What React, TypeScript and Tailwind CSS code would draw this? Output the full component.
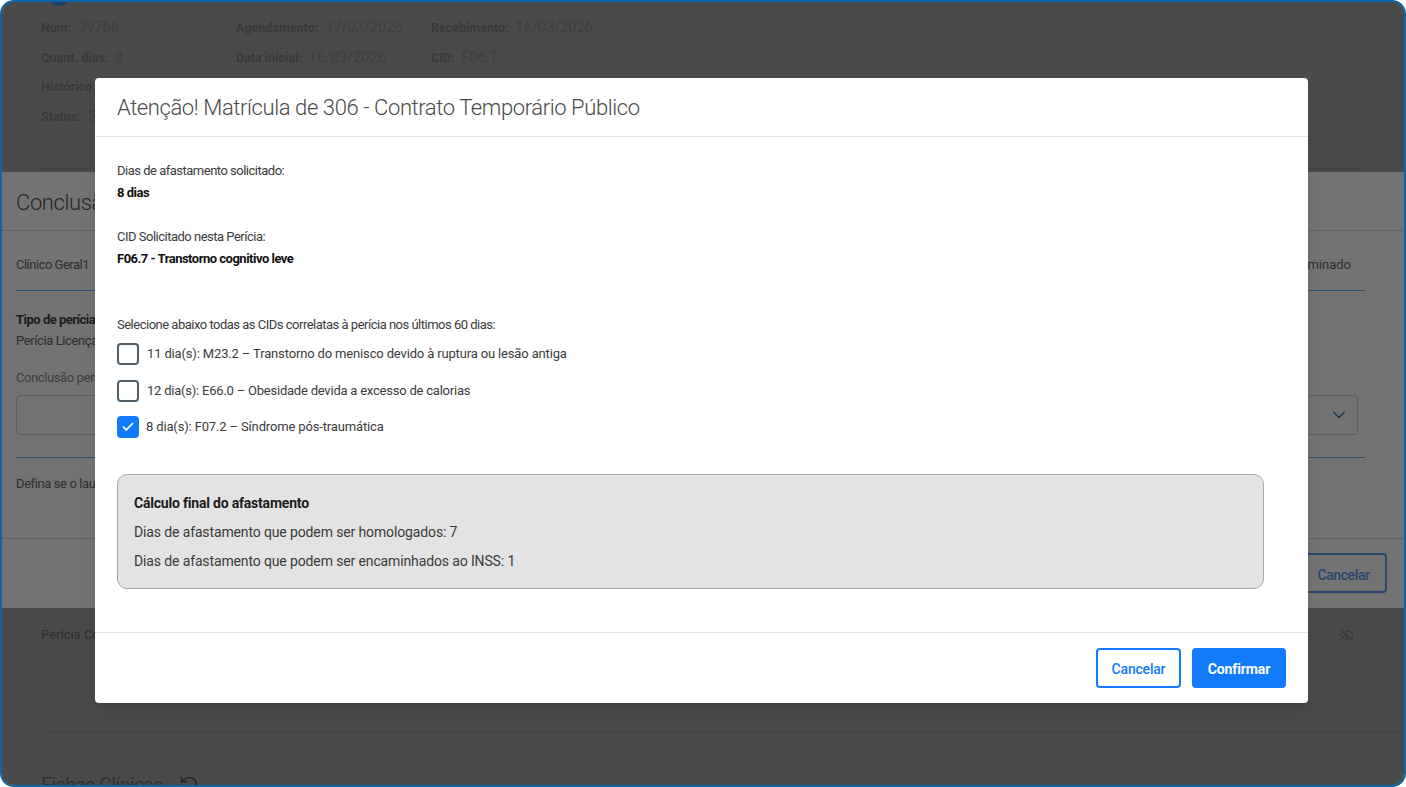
import { Check, ChevronDown, EyeOff, RefreshCcw } from 'lucide-react';

function InfoItem({ label, value, width }: { label: string; value?: string; width: string }) {
  return (
    <div className={`flex items-baseline gap-[7px] ${width}`}>
      <span className="text-[12.5px] font-bold leading-[18px] text-[#7e7e7e]">{label}</span>
      {value && <span className="text-[14.5px] leading-[18px] text-[#8c8c8c]">{value}</span>}
    </div>
  );
}

function CidOption({ text, checked, tight }: { text: string; checked?: boolean; tight?: boolean }) {
  return (
    <label className={checked ? '-mt-px flex h-[22px] items-center gap-[7px]' : 'flex h-[22px] items-center gap-2'}>
      {checked ? (
        <span className="flex h-[22px] w-[22px] items-center justify-center rounded-[4px] bg-[#127bfb] text-white">
          <Check size={14} strokeWidth={3} />
        </span>
      ) : (
        <span className="h-[22px] w-[22px] rounded-[4px] border-2 border-[#4d5f68] bg-white" />
      )}
      <span className={tight ? 'text-[13px] tracking-[-0.22px] text-[#3b3b3b]' : 'text-[13px] tracking-[-0.15px] text-[#3b3b3b]'}>
        {text}
      </span>
    </label>
  );
}

export default function App() {
  return (
    <div className="h-[787px] w-[1406px] overflow-hidden bg-white font-['Roboto',sans-serif]">
      <div className="relative h-full overflow-hidden rounded-[14px] border-2 border-[#0b67a8] bg-[#a5a5a5]">
        {/* Page behind the dialog */}
        <div className="flex h-[170px] flex-col">
          <div className="-mt-[20px] mb-[13px] ml-[46px] h-[24px] w-[22px] shrink-0 rounded-full bg-[#3f8fe8]" />
          <div className="flex flex-col gap-[11.6px] pl-[39px]">
            <div className="flex h-[18px]">
              <InfoItem label="Num:" value="39766" width="w-[195px]" />
              <InfoItem label="Agendamento:" value="17/03/2026" width="w-[195px]" />
              <InfoItem label="Recebimento:" value="16/03/2026" width="w-[195px]" />
            </div>
            <div className="flex h-[18px]">
              <InfoItem label="Quant. dias:" value="8" width="w-[195px]" />
              <InfoItem label="Data inicial:" value="16/03/2026" width="w-[195px]" />
              <InfoItem label="CID:" value="F06.7" width="w-[195px]" />
            </div>
            <div className="flex h-[18px]">
              <InfoItem label="Histórico" width="w-[195px]" />
            </div>
            <div className="flex h-[18px]">
              <InfoItem label="Status:" value="S" width="w-[195px]" />
            </div>
          </div>
          <div className="mb-[3px] ml-[38px] mr-[38px] mt-auto border-b border-[#959595]" />
        </div>

        <section className="h-[436px] bg-white">
          <h2 className="flex h-[59px] items-center border-b border-[#d5d5d5] px-[14px] pt-[2px] text-[22px] font-light tracking-[-0.4px] text-[#555]">
            Conclusão
          </h2>
          <div className="ml-[14px] mr-[39px] flex h-[60px] items-center justify-between border-b border-[#5db0ff] pr-[14px] pt-[8px] text-[13px] text-[#666]">
            <span className="tracking-[-0.5px]">Clínico Geral1</span>
            <span>Não examinado</span>
          </div>
          <div className="px-[14px] pt-[19px]">
            <p className="text-[13px] font-bold tracking-[-0.5px] text-[#444]">Tipo de perícia</p>
            <p className="mt-[1px] text-[13px] tracking-[-0.4px] text-[#666]">Perícia Licença</p>
            <p className="mt-[18px] text-[13px] tracking-[-0.4px] text-[#888]">Conclusão pericial</p>
            <div className="mr-[32px] mt-[7px] flex h-[40px] items-center justify-end rounded-[4px] border border-[#cfcfcf] pr-[8px] text-[#4a7aa8]">
              <ChevronDown size={20} />
            </div>
            <div className="mr-[25px] mt-[22px] border-b border-[#7fb4e6]" />
            <p className="mt-[16px] text-[13px] tracking-[-0.4px] text-[#666]">Defina se o laudo</p>
          </div>
          <div className="mt-[45px] flex h-[70px] items-center justify-end border-t border-[#d5d5d5] pb-[2px] pr-[17px]">
            <button className="h-[40px] w-[90px] rounded-[4px] border-2 border-[#5a9cf5] pl-[3px] pt-[5px] text-[14px] font-medium tracking-[-0.4px] text-[#5a9cf5]">
              Cancelar
            </button>
          </div>
        </section>

        <div className="pl-[39px] pr-[50px] pt-[18px]">
          <div className="flex h-[18px] items-center justify-between">
            <span className="text-[13px] text-[#666]">Perícia Complementar</span>
            <EyeOff size={14} className="text-[#7a7a7a]" />
          </div>
          <div className="mr-[-50px] mt-[87px] border-b border-[#959595]" />
          <div className="mt-[38px] flex items-center gap-[16px] text-[20px] tracking-[-0.8px] text-[#6d6d6d]">
            <span>Fichas Clínicas</span>
            <RefreshCcw size={20} className="text-[#555]" />
          </div>
        </div>

        {/* Backdrop */}
        <div className="absolute inset-0 bg-black/55" />

        {/* Dialog */}
        <div className="absolute left-[93px] top-[76px] flex h-[625px] w-[1213px] flex-col rounded-[4px] bg-white shadow-lg">
          <header className="flex h-[59px] shrink-0 items-center border-b border-[#e4e4e4] px-[22px] pt-[1px]">
            <h1 className="text-[22px] font-light tracking-[-0.4px] text-[#4a4a4a]">
              Atenção! Matrícula de 306 - Contrato Temporário Público
            </h1>
          </header>
          <div className="flex-1 px-[22px] pt-[26px]">
            <p className="text-[13px] leading-[16px] tracking-[-0.5px] text-[#3b3b3b]">Dias de afastamento solicitado:</p>
            <p className="mt-[6px] text-[13px] font-bold leading-[16px] tracking-[-0.5px] text-[#111]">8 dias</p>
            <p className="mt-[28px] text-[13px] leading-[16px] tracking-[-0.5px] text-[#3b3b3b]">CID Solicitado nesta Perícia:</p>
            <p className="mt-[6px] text-[13px] font-bold leading-[16px] tracking-[-0.5px] text-[#111]">F06.7 - Transtorno cognitivo leve</p>
            <p className="mt-[50px] text-[13px] leading-[16px] tracking-[-0.5px] text-[#3b3b3b]">
              Selecione abaixo todas as CIDs correlatas à perícia nos últimos 60 dias:
            </p>
            <div className="mt-[10px] flex flex-col gap-[15px]">
              <CidOption text="11 dia(s): M23.2 – Transtorno do menisco devido à ruptura ou lesão antiga" />
              <CidOption text="12 dia(s): E66.0 – Obesidade devida a excesso de calorias" tight />
              <CidOption text="8 dia(s): F07.2 – Síndrome pós-traumática" checked />
            </div>
            <div className="mt-[36px] h-[115px] w-[1147px] rounded-[10px] border border-[#a8a8a8] bg-[#e3e3e3] px-[16px] pt-[18px] text-[14px] leading-[20px] tracking-[-0.13px] text-[#3b3b3b]">
              <p className="font-bold tracking-[-0.2px] text-[#1b1b1b]">Cálculo final do afastamento</p>
              <p className="mt-[9px]">Dias de afastamento que podem ser homologados: 7</p>
              <p className="mt-[9px]">Dias de afastamento que podem ser encaminhados ao INSS: 1</p>
            </div>
          </div>
          <footer className="flex h-[71px] shrink-0 items-start justify-end gap-[11px] border-t border-[#e4e4e4] pr-[22px] pt-[15px]">
            <button className="h-[40px] w-[85px] rounded-[4px] border-2 border-[#127bfb] bg-white pt-[3px] text-[14px] font-medium tracking-[-0.2px] text-[#127bfb]">
              Cancelar
            </button>
            <button className="h-[40px] w-[94px] rounded-[4px] bg-[#127bfb] pt-[3px] text-[14px] font-bold tracking-[-0.1px] text-white">
              Confirmar
            </button>
          </footer>
        </div>
      </div>
    </div>
  );
}
